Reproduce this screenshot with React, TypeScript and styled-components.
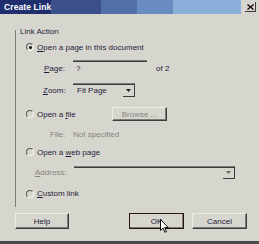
import * as React from 'react';
import styled, { createGlobalStyle } from 'styled-components';

const colors = {
    face: '#d7d6ce',
    text: '#1e1b3a',
    disabled: '#85847e',
    shadow: '#7c7b76',
    dark: '#3c3c3c',
};

const GlobalStyle = createGlobalStyle`
    html, body {
        margin: 0;
        padding: 0;
        background: ${colors.face};
    }
`;

const Window = styled.div`
    width: 259px;
    height: 244px;
    box-sizing: border-box;
    background: ${colors.face};
    border-bottom: 3px solid #4a4a48;
    display: flex;
    flex-direction: column;
    position: relative;
    overflow: hidden;
    font-family: "Liberation Sans", Arial, sans-serif;
    font-size: 8px;
    color: ${colors.text};
`;

const TitleBar = styled.div`
    height: 14px;
    display: flex;
    align-items: center;
    background: linear-gradient(to right,
        #1f2e6c 0 51px,
        #3b4f8b 51px 101px,
        #5170a8 101px 137px,
        #6a8bc0 137px 173px,
        #8bafdb 173px 241px,
        transparent 241px);
`;

const Title = styled.span`
    padding-left: 4px;
    color: #ffffff;
    font-weight: bold;
    font-size: 8.5px;
    letter-spacing: 0.1px;
`;

const CloseButton = styled.div`
    margin-left: auto;
    margin-right: 3px;
    width: 11px;
    height: 10px;
    box-sizing: border-box;
    border-right: 1px solid ${colors.dark};
    border-bottom: 1px solid ${colors.dark};
    display: flex;
    align-items: center;
    justify-content: center;
`;

const GroupBox = styled.div`
    margin: 10px 0 0 15px;
    display: flex;
    flex-direction: column;
    background: linear-gradient(${colors.shadow}, ${colors.shadow}) no-repeat 0 6px / 1px calc(100% - 6px);
`;

const Legend = styled.div`
    height: 14px;
    display: flex;
    align-items: center;
    padding-left: 5px;
`;

const Row = styled.div<{ $h: number; $indent: number }>`
    height: ${p => p.$h}px;
    display: flex;
    align-items: center;
    padding-left: ${p => p.$indent}px;
`;

const Radio = styled.span<{ $checked?: boolean }>`
    width: 8px;
    height: 8px;
    box-sizing: border-box;
    border-radius: 50%;
    border: 1px solid;
    border-color: #5a5a58 #f4f4ee #f4f4ee #5a5a58;
    display: flex;
    align-items: center;
    justify-content: center;
    margin-right: 3px;

    &::after {
        content: '';
        display: ${p => (p.$checked ? 'block' : 'none')};
        width: 3px;
        height: 3px;
        border-radius: 50%;
        background: #111;
    }
`;

const RadioText = styled.span<{ $w?: number }>`
    ${p => (p.$w ? `width: ${p.$w}px;` : '')}
    white-space: nowrap;
`;

const Label = styled.span<{ $w: number; $disabled?: boolean }>`
    width: ${p => p.$w}px;
    flex: none;
    color: ${p => (p.$disabled ? colors.disabled : colors.text)};
    white-space: nowrap;
`;

const TextBox = styled.div<{ $w: number }>`
    width: ${p => p.$w}px;
    height: 16px;
    box-sizing: border-box;
    border-top: 1px solid ${colors.shadow};
    box-shadow: inset 0 1px 0 ${colors.dark};
    display: flex;
    align-items: center;
    padding-left: 3px;
`;

const Suffix = styled.span`
    margin-left: 9px;
`;

const Combo = styled.div<{ $w: number; $h: number; $disabled?: boolean }>`
    width: ${p => p.$w}px;
    height: ${p => p.$h}px;
    box-sizing: border-box;
    border-top: 1px solid ${colors.shadow};
    border-right: 1px solid ${colors.dark};
    box-shadow: inset 0 1px 0 ${colors.dark};
    display: flex;
    align-items: center;
    padding-left: 4px;
    color: ${p => (p.$disabled ? colors.disabled : colors.text)};
`;

const DropButton = styled.div`
    margin-left: auto;
    width: 11px;
    height: 100%;
    box-sizing: border-box;
    border-bottom: 1px solid ${colors.dark};
    display: flex;
    align-items: center;
    justify-content: center;
`;

const Button = styled.div<{ $w: number; $default?: boolean; $disabled?: boolean }>`
    width: ${p => p.$w}px;
    height: 16px;
    box-sizing: border-box;
    flex: none;
    display: flex;
    align-items: center;
    justify-content: center;
    color: ${p => (p.$disabled ? colors.disabled : colors.text)};
    border: 1px solid;
    border-color: ${p => (p.$default ? '#2a1414' : `#ecebe4 ${colors.dark} ${colors.dark} #ecebe4`)};
    box-shadow: ${p => (p.$default ? `inset -1px -1px 0 ${colors.shadow}` : `inset -1px -1px 0 ${colors.shadow}`)};
`;

const BrowseButton = styled(Button)`
    height: 14px;
`;

const ButtonRow = styled.div`
    margin-top: 6px;
    display: flex;
    padding: 0 12px 0 15px;
    gap: 8px;
    position: relative;

    & > :nth-child(2) {
        margin-left: auto;
    }
`;

const Cursor = styled.svg`
    position: absolute;
    left: 160px;
    top: 6px;
`;

function DownArrow({ color = '#1a1a1a' }: { color?: string }) {
    return (
        <svg width="5" height="3" viewBox="0 0 5 3">
            <path d="M0 0h5L2.5 3z" fill={color} />
        </svg>
    );
}

export default function App() {
    return (
        <>
            <GlobalStyle />
            <Window>
                <TitleBar>
                    <Title>Create Link</Title>
                    <CloseButton>
                        <svg width="7" height="6" viewBox="0 0 7 6">
                            <path d="M0.5 0.5l6 5M6.5 0.5l-6 5" stroke="#1a0a0a" strokeWidth="1.4" />
                        </svg>
                    </CloseButton>
                </TitleBar>

                <GroupBox>
                    <Legend>Link Action</Legend>

                    <Row $h={18} $indent={11}>
                        <Radio $checked />
                        <RadioText><u>O</u>pen a page in this document</RadioText>
                    </Row>

                    <Row $h={24} $indent={29}>
                        <Label $w={29}><u>P</u>age:</Label>
                        <TextBox $w={74}>?</TextBox>
                        <Suffix>of 2</Suffix>
                    </Row>

                    <Row $h={20} $indent={28}>
                        <Label $w={30}><u>Z</u>oom:</Label>
                        <Combo $w={62} $h={14}>
                            Fit Page
                            <DropButton><DownArrow /></DropButton>
                        </Combo>
                    </Row>

                    <Row $h={28} $indent={11}>
                        <Radio />
                        <RadioText $w={75}>Open a <u>f</u>ile</RadioText>
                        <BrowseButton $w={55} $disabled>Browse ...</BrowseButton>
                    </Row>

                    <Row $h={12} $indent={35}>
                        <Label $w={23} $disabled>File:</Label>
                        <Label $w={80} $disabled>Not specified</Label>
                    </Row>

                    <Row $h={24} $indent={11}>
                        <Radio />
                        <RadioText>Open a <u>w</u>eb page</RadioText>
                    </Row>

                    <Row $h={16} $indent={20}>
                        <Label $w={39} $disabled><u>A</u>ddress:</Label>
                        <Combo $w={161} $h={13} $disabled>
                            <DropButton><DownArrow color="#6a6a66" /></DropButton>
                        </Combo>
                    </Row>

                    <Row $h={27} $indent={11}>
                        <Radio />
                        <RadioText><u>C</u>ustom link</RadioText>
                    </Row>
                </GroupBox>

                <ButtonRow>
                    <Button $w={54}>Help</Button>
                    <Button $w={55} $default>OK</Button>
                    <Button $w={55}>Cancel</Button>
                    <Cursor width="9" height="14" viewBox="0 0 9 14">
                        <path d="M0.5 0.5v11l2.6-2.4 1.8 4.2 1.6-0.7-1.8-4.1h3.5z" fill="#ffffff" stroke="#111111" strokeWidth="1" />
                    </Cursor>
                </ButtonRow>
            </Window>
        </>
    );
}
